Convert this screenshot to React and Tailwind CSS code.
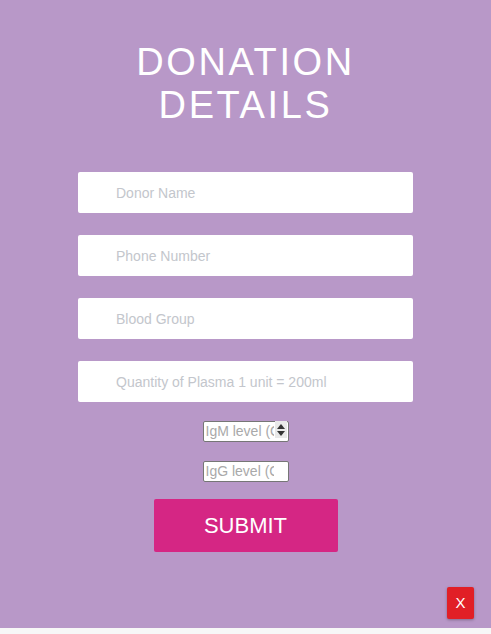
export default function App() {
  const fields = ["Donor Name", "Phone Number", "Blood Group", "Quantity of Plasma 1 unit = 200ml"];
  return (
    <div className="min-h-[634px] bg-[#f7f7f7] font-['Liberation_Sans',Arial,sans-serif]">
      <div className="relative h-[628px] bg-[#b898c8] flex flex-col items-center pt-[41px]">
        <h1 className="text-white text-[38px] leading-[43px] tracking-[2.6px] text-center font-normal">
          DONATION
          <br />
          DETAILS
        </h1>

        <div className="mt-[45px] flex flex-col gap-[22px] w-[335px]">
          {fields.map(f => (
            <input
              key={f}
              placeholder={f}
              className="h-[41px] w-full bg-white rounded-[2px] pl-[38px] text-[14px] outline-none placeholder:text-[#c3c6cc]"
            />
          ))}
        </div>

        <div className="mt-[17px] relative">
          <input
            placeholder="IgM level (CU)"
            className="h-[21px] w-[86px] bg-white border border-[#767676] rounded-[2px] pl-[2px] pr-[14px] text-[14px] outline-none placeholder:text-[#a9a9a9]"
          />
          <div className="absolute right-[2px] top-[2px] w-[12px] h-[17px] bg-[#e9e9e9] flex flex-col items-center justify-center gap-[2px]">
            <svg width="8" height="5" viewBox="0 0 8 5"><path d="M0 5 L4 0 L8 5 Z" fill="#333" /></svg>
            <svg width="8" height="5" viewBox="0 0 8 5"><path d="M0 0 L4 5 L8 0 Z" fill="#333" /></svg>
          </div>
        </div>

        <input
          placeholder="IgG level (CU)"
          className="mt-[18px] h-[21px] w-[86px] bg-white border border-[#767676] rounded-[2px] pl-[2px] pr-[14px] text-[14px] outline-none placeholder:text-[#a9a9a9]"
        />

        <button className="mt-[17px] w-[184px] h-[53px] bg-[#d52684] text-white text-[22px] rounded-[2px]">
          SUBMIT
        </button>

        <button className="absolute right-[17px] top-[587px] w-[27px] h-[32px] bg-[#e11f26] text-white text-[15px] rounded-[2px] shadow-[0_1px_3px_rgba(0,0,0,0.3)]">
          X
        </button>
      </div>
    </div>
  );
}
